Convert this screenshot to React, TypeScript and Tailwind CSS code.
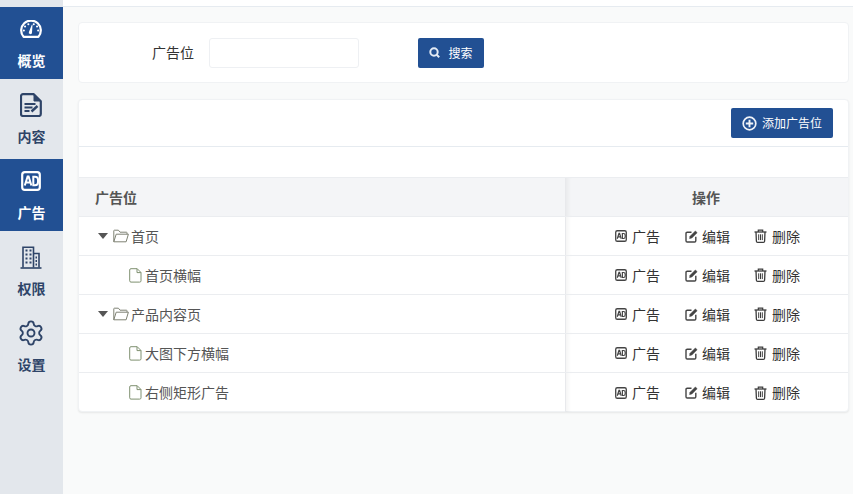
import React from 'react';
import { Settings } from 'lucide-react';

const font = { fontFamily: '"Noto Sans CJK SC", "Liberation Sans", sans-serif' };

function GaugeIcon() {
  return (
    <svg width="22" height="18" viewBox="0 0 22 18" fill="none">
      <path d="M3.600 16.800A9.800 9.800 0 1 1 18.400 16.800Z" stroke="#fff" strokeWidth="2.200" strokeLinejoin="round" />
      <path d="M5 6.500h.1M8.300 4.200h.1M13.700 4.200h.1M17 6.500h.1M3.800 10.500h.1M18.100 10.500h.1" stroke="#fff" strokeWidth="2" strokeLinecap="round" />
      <path d="M11.800 4.800l.7 .2-.5 7.500a1.600 1.600 0 1 1-3 -.8Z" fill="#fff" />
    </svg>
  );
}

function ContentIcon() {
  return (
    <svg width="22" height="24" viewBox="0 0 22 24" fill="none" stroke="#2e4468">
      <path d="M3 1.200h10.800l7 7v12.800a2 2 0 0 1-2 2H3a2 2 0 0 1-2-2V3.200a2 2 0 0 1 2-2Z" strokeWidth="2.200" strokeLinejoin="round" />
      <path d="M14 1.500v6.500h6.500Z" fill="#2e4468" strokeWidth="1" />
      <path d="M4.500 11h11M4.500 14.500h8M4.500 18h5" strokeWidth="1.800" />
      <path d="M11.500 18.500l6-5.500" strokeWidth="2.400" />
    </svg>
  );
}

function AdIcon({ color, size, stroke, text }: { color: string; size: number; stroke: number; text: string }) {
  return (
    <svg width={size} height={size} viewBox="0 0 20 20" fill="none">
      <rect x="1.200" y="1.200" width="17.600" height="17.600" rx="2.600" stroke={color} strokeWidth={stroke} />
      <path d="M3.800 14.500l2.800-9h1l2.800 9M5 11.500h4.300" stroke={text} strokeWidth="2" />
      <path d="M12.300 5.800h1.700a3 3 0 0 1 3 3v2.400a3 3 0 0 1-3 3h-1.700Z" stroke={text} strokeWidth="2" />
    </svg>
  );
}

function BuildingIcon() {
  return (
    <svg width="22" height="24" viewBox="0 0 22 24" fill="none" stroke="#2e4468">
      <path d="M3 22.500V2.200h10.500v20.300M13.500 8.500H19v14" strokeWidth="1.600" />
      <path d="M0.500 23h21" strokeWidth="1.600" />
      <path d="M5.500 5.500h2M9.500 5.500h2M5.500 9.500h2M9.500 9.500h2M5.500 13.500h2M9.500 13.500h2M5.500 17.500h2M9.500 17.500h2M15.500 12.500h1.500M15.500 16h1.500M15.500 19.500h1.500" strokeWidth="2.200" />
    </svg>
  );
}

function SearchIcon() {
  return (
    <svg width="11" height="11" viewBox="0 0 11 11" fill="none" stroke="#e4ebf5" strokeWidth="2">
      <circle cx="5" cy="5" r="3.700" />
      <path d="M7.700 7.700l2.500 2.500" />
    </svg>
  );
}

function PlusCircleIcon() {
  return (
    <svg width="15" height="15" viewBox="0 0 15 15" fill="none" stroke="#f0f3f8">
      <circle cx="7.500" cy="7.500" r="6.300" strokeWidth="1.700" />
      <path d="M7.500 3.800v7.400M3.800 7.500h7.400" strokeWidth="1.900" />
    </svg>
  );
}

function EditIcon() {
  return (
    <svg width="13" height="13" viewBox="0 0 13 13" fill="none" stroke="#444">
      <path d="M10.800 6.800v4a1.200 1.200 0 0 1-1.200 1.200H2.200A1.200 1.200 0 0 1 1 10.800V3.400a1.200 1.200 0 0 1 1.200-1.200h4.300" strokeWidth="1.400" />
      <path d="M4.600 8.500l.5-2.200L10.400 1l1.700 1.700-5.300 5.300Z" fill="#444" strokeWidth="0.600" />
    </svg>
  );
}

function TrashIcon() {
  return (
    <svg width="13" height="14" viewBox="0 0 13 14" fill="none" stroke="#3c3c3c">
      <path d="M0.500 3h12" strokeWidth="1.300" />
      <path d="M4.300 3V1.200h4.400V3" strokeWidth="1.200" />
      <path d="M2 3l.4 9.200a1.200 1.200 0 0 0 1.200 1.100h5.800a1.200 1.200 0 0 0 1.200-1.100L11 3" strokeWidth="1.300" />
      <path d="M4.700 5.300v5.800M6.500 5.300v5.800M8.300 5.300v5.800" strokeWidth="1" />
    </svg>
  );
}

function FolderIcon() {
  return (
    <svg width="16" height="14" viewBox="0 0 16 14" fill="none" stroke="#7f8274" strokeWidth="1">
      <path d="M0.800 12.800V1.800a.6 .6 0 0 1 .6-.6h4l1.600 2h6.400a.6 .6 0 0 1 .6 .6v1.400" />
      <path d="M0.800 12.800l2.400-7.600H15.400l-2.300 7.600Z" />
    </svg>
  );
}

function FileIcon() {
  return (
    <svg width="13" height="15" viewBox="0 0 13 15" fill="none" stroke="#7f9070" strokeWidth="1">
      <path d="M2 .7h6.200l3.800 3.800v8.300a1.300 1.300 0 0 1-1.300 1.300H2A1.300 1.300 0 0 1 .7 12.800V2A1.300 1.300 0 0 1 2 .7Z" />
      <path d="M8 .8v3.800h3.900" />
    </svg>
  );
}

const navItems = [
  { label: '概览', icon: <GaugeIcon />, active: true },
  { label: '内容', icon: <ContentIcon />, active: false },
  { label: '广告', icon: <AdIcon color="#fff" size={20} stroke={2.200} text="#fff" />, active: true },
  { label: '权限', icon: <BuildingIcon />, active: false },
  { label: '设置', icon: <Settings size={28} strokeWidth={1.600} color="#2e4468" />, active: false },
];

const rows = [
  { name: '首页', parent: true },
  { name: '首页横幅', parent: false },
  { name: '产品内容页', parent: true },
  { name: '大图下方横幅', parent: false },
  { name: '右侧矩形广告', parent: false },
];

function Sidebar() {
  return (
    <div className="w-[63px] shrink-0 bg-[#e3e7ec] pt-[7px] flex flex-col gap-1">
      {navItems.map((item) => (
        <div
          key={item.label}
          className={`h-[72px] flex flex-col items-center ${item.active ? 'bg-[#225093] text-white' : 'text-[#2e4468]'}`}
        >
          <div className="h-[24px] mt-[10px] pr-[2px] flex items-center justify-center">{item.icon}</div>
          <div className="mt-[9px] text-[14px] leading-[20px] font-bold">{item.label}</div>
        </div>
      ))}
    </div>
  );
}

function Action({ icon, label, className = '' }: { icon: React.ReactNode; label: string; className?: string }) {
  return (
    <span className={`flex items-center gap-[4px] ${className}`}>
      {icon}
      <span>{label}</span>
    </span>
  );
}

export default function App() {
  return (
    <div className="flex h-[494px] w-[853px] overflow-hidden bg-[#f9fafa] text-[14px] text-[#333]" style={font}>
      <Sidebar />
      <div className="flex-1 min-w-0">
        <div className="h-[7px] bg-white border-b border-[#e6ebf0]" />
        <div className="pl-[15px] pr-[4px] pt-[15px] flex flex-col gap-4">
          <div className="h-[61px] bg-white border border-[#f0f2f4] rounded-[4px] flex items-center">
            <span className="ml-[73px] w-[42px] text-[#333]">广告位</span>
            <div className="ml-[15px] w-[150px] h-[30px] bg-white border border-[#eef0f3] rounded-[3px]" />
            <button className="ml-[59px] w-[66px] h-[30px] bg-[#225093] rounded-[2px] text-white text-[12px] flex items-center justify-center gap-[8px]">
              <SearchIcon />
              <span>搜索</span>
            </button>
          </div>

          <div className="h-[313px] bg-white border border-[#f0f2f4] rounded-[4px] shadow-[0_1px_2px_rgba(0,0,0,0.08)]">
            <div className="h-[47px] border-b border-[#e6ebf0] flex items-center justify-end pr-[15px]">
              <button className="w-[102px] h-[30px] bg-[#225093] rounded-[2px] text-white text-[12px] flex items-center justify-center gap-[5px]">
                <PlusCircleIcon />
                <span>添加广告位</span>
              </button>
            </div>
            <div className="h-[30px]" />
            <div className="border-t border-[#ebedf0]">
              <div className="flex h-[39px] bg-[#f4f5f7] border-b border-[#ebedf0] font-bold text-[#555]">
                <div className="w-[486px] pl-[16px] flex items-center">广告位</div>
                <div className="flex-1 pr-[2px] flex items-center justify-center border-l border-[#e8e9ec] shadow-[inset_5px_0_4px_-3px_rgba(0,0,0,0.05)]">操作</div>
              </div>
              {rows.map((row) => (
                <div key={row.name} className="flex h-[39px] border-b border-[#ebedf0] last:border-b-0">
                  <div className="w-[486px] flex items-center text-[#555]">
                    {row.parent ? (
                      <div className="pl-[19px] flex items-center">
                        <span className="w-0 h-0 border-x-[5.500px] border-x-transparent border-t-[6px] border-t-[#555] mr-[5px]" />
                        <FolderIcon />
                        <span className="ml-[2px]">{row.name}</span>
                      </div>
                    ) : (
                      <div className="pl-[50px] flex items-center">
                        <FileIcon />
                        <span className="ml-[3px]">{row.name}</span>
                      </div>
                    )}
                  </div>
                  <div className="flex-1 pl-[49px] flex items-center gap-[24px] border-l border-[#e8e9ec] shadow-[inset_5px_0_4px_-3px_rgba(0,0,0,0.05)] text-[#333]">
                    <Action icon={<AdIcon color="#444" size={12} stroke={2.200} text="#444" />} label="广告" className="mr-px gap-[5px]" />
                    <Action icon={<EditIcon />} label="编辑" />
                    <Action icon={<TrashIcon />} label="删除" className="gap-[5px]" />
                  </div>
                </div>
              ))}
            </div>
          </div>
        </div>
      </div>
    </div>
  );
}
